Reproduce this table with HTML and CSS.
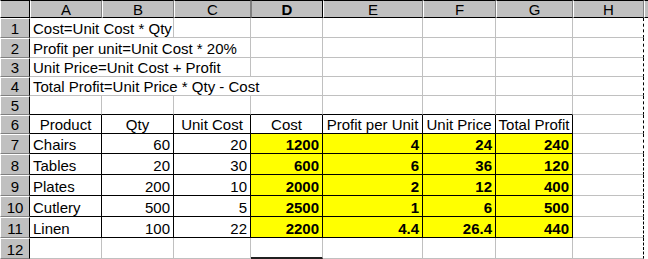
FILE: index.html
```html
<!DOCTYPE html>
<html lang="en">
<head>
    <meta charset="UTF-8">
    <meta name="viewport" content="width=device-width, initial-scale=1.0">
    <title>Product Costs</title>
    <link rel="stylesheet" href="styles.css">
</head>
<body>
    <div class="sheet">
        <!-- column headers -->
        <div class="corner"></div>
        <div class="col-head">A</div>
        <div class="col-head">B</div>
        <div class="col-head">C</div>
        <div class="col-head selected">D</div>
        <div class="col-head">E</div>
        <div class="col-head">F</div>
        <div class="col-head">G</div>
        <div class="col-head">H</div>
        <div class="col-head edge-head"></div>

        <!-- notes -->
        <div class="row-head">1</div>
        <div class="c span-2">Cost=Unit Cost * Qty</div>
        <div class="c"></div><div class="c"></div><div class="c"></div><div class="c"></div><div class="c"></div>
        <div class="c last"></div><div class="edge"></div>

        <div class="row-head">2</div>
        <div class="c span-3">Profit per unit=Unit Cost * 20%</div>
        <div class="c"></div><div class="c"></div><div class="c"></div><div class="c"></div>
        <div class="c last"></div><div class="edge"></div>

        <div class="row-head">3</div>
        <div class="c span-3">Unit Price=Unit Cost + Profit</div>
        <div class="c"></div><div class="c"></div><div class="c"></div><div class="c"></div>
        <div class="c last"></div><div class="edge"></div>

        <div class="row-head">4</div>
        <div class="c span-4">Total Profit=Unit Price * Qty - Cost</div>
        <div class="c"></div><div class="c"></div><div class="c"></div>
        <div class="c last"></div><div class="edge"></div>

        <div class="row-head">5</div>
        <div class="c above"></div><div class="c above"></div><div class="c above"></div><div class="c above"></div>
        <div class="c above"></div><div class="c above"></div><div class="c above"></div>
        <div class="c last"></div><div class="edge"></div>

        <!-- table -->
        <div class="row-head">6</div>
        <div class="c box ctr">Product</div>
        <div class="c box ctr">Qty</div>
        <div class="c box ctr">Unit Cost</div>
        <div class="c box ctr">Cost</div>
        <div class="c box ctr">Profit per Unit</div>
        <div class="c box ctr">Unit Price</div>
        <div class="c box ctr">Total Profit</div>
        <div class="c last"></div><div class="edge"></div>

        <div class="row-head">7</div>
        <div class="c box">Chairs</div>
        <div class="c box num">60</div>
        <div class="c box num">20</div>
        <div class="c box num calc">1200</div>
        <div class="c box num calc">4</div>
        <div class="c box num calc">24</div>
        <div class="c box num calc">240</div>
        <div class="c last"></div><div class="edge"></div>

        <div class="row-head">8</div>
        <div class="c box">Tables</div>
        <div class="c box num">20</div>
        <div class="c box num">30</div>
        <div class="c box num calc">600</div>
        <div class="c box num calc">6</div>
        <div class="c box num calc">36</div>
        <div class="c box num calc">120</div>
        <div class="c last"></div><div class="edge"></div>

        <div class="row-head">9</div>
        <div class="c box">Plates</div>
        <div class="c box num">200</div>
        <div class="c box num">10</div>
        <div class="c box num calc">2000</div>
        <div class="c box num calc">2</div>
        <div class="c box num calc">12</div>
        <div class="c box num calc">400</div>
        <div class="c last"></div><div class="edge"></div>

        <div class="row-head">10</div>
        <div class="c box">Cutlery</div>
        <div class="c box num">500</div>
        <div class="c box num">5</div>
        <div class="c box num calc">2500</div>
        <div class="c box num calc">1</div>
        <div class="c box num calc">6</div>
        <div class="c box num calc">500</div>
        <div class="c last"></div><div class="edge"></div>

        <div class="row-head">11</div>
        <div class="c box">Linen</div>
        <div class="c box num">100</div>
        <div class="c box num">22</div>
        <div class="c box num calc">2200</div>
        <div class="c box num calc">4.4</div>
        <div class="c box num calc">26.4</div>
        <div class="c box num calc">440</div>
        <div class="c last"></div><div class="edge"></div>

        <div class="row-head">12</div>
        <div class="c"></div><div class="c"></div><div class="c"></div>
        <div class="c active-col"></div>
        <div class="c"></div><div class="c"></div><div class="c"></div>
        <div class="c last"></div><div class="edge"></div>
    </div>
</body>
</html>
```

FILE: styles.css
```css
body {
    margin: 0;
    background-color: white;
    font-family: "Liberation Sans", Arial, sans-serif;
    font-size: 15px;
    color: black;
}

.sheet {
    display: grid;
    grid-template-columns: 30px 72px 72px 77px 72px 100px 73px 77px 71px 4px;
    grid-template-rows: 18px 20px 20px 19px 19px 19px 19px 20px 21px 21px 21px 21px 21px;
}

/* headers */
.corner,
.col-head,
.row-head {
    box-sizing: border-box;
    background-color: #c0c0c0;
    display: flex;
    justify-content: center;
    line-height: 15px;
}

.corner,
.col-head {
    align-items: center;
    border-top: 1px solid #000;
    border-left: 1px solid #fff;
    border-right: 1px solid #808080;
    border-bottom: 1px solid #000;
    padding-top: 1px;
}

.corner {
    border-right: 1px solid #000;
}

.col-head.selected {
    font-weight: bold;
    border-left: 1px solid #808080;
    border-right: 1px solid #000;
}

.edge-head {
    border-right: none;
}

.row-head {
    align-items: flex-end;
    padding-bottom: 1px;
    border-left: 1px solid #fff;
    border-top: 1px solid #fff;
    border-right: 1px solid #000;
    border-bottom: 1px solid #808080;
}

/* cells */
.c {
    box-sizing: border-box;
    display: flex;
    align-items: flex-end;
    overflow: hidden;
    white-space: nowrap;
    line-height: 15px;
    padding: 0 3px 1px;
    border-right: 1px solid #c0c0c0;
    border-bottom: 1px solid #c0c0c0;
}

.span-2 { grid-column: span 2; }
.span-3 { grid-column: span 3; }
.span-4 { grid-column: span 4; }

.above {
    border-bottom-color: #000;
}

.box {
    border-right-color: #000;
    border-bottom-color: #000;
}

.ctr {
    justify-content: center;
}

.num {
    justify-content: flex-end;
}

.calc {
    background-color: #ffff00;
    font-weight: bold;
}

.last {
    border-right: 1px dashed #000;
}

.active-col {
    border-bottom: 2px solid #202020;
}

.edge {
    background-color: white;
}
```
